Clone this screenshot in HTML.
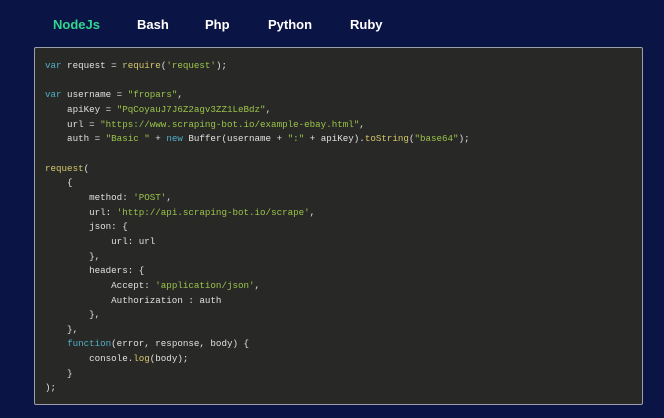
<!DOCTYPE html>
<html><head><style>
html,body{margin:0;padding:0;width:664px;height:418px;background:#0a1445;overflow:hidden}
.tab{position:absolute;top:17px;font:bold 13px "Liberation Sans",sans-serif;color:#fff}
.box{position:absolute;left:34px;top:47px;width:607px;height:356px;background:#282827;border:1px solid #9aa0a8;border-radius:2px}
pre{position:absolute;left:10px;top:11px;margin:0;font:9.2px/14.65px "Liberation Mono",monospace;color:#e0e0e0}
.k{color:#4fb0c6}.s{color:#9bc44a}.f{color:#d4c86a}
</style></head><body>
<div class="tab" style="left:53px;color:#2fd68e">NodeJs</div>
<div class="tab" style="left:137px">Bash</div>
<div class="tab" style="left:205px">Php</div>
<div class="tab" style="left:268px">Python</div>
<div class="tab" style="left:350px">Ruby</div>
<div class="box"><pre><span class="k">var</span> request = <span class="f">require</span>(<span class="s">'request'</span>);

<span class="k">var</span> username = <span class="s">"fropars"</span>,
    apiKey = <span class="s">"PqCoyauJ7J6Z2agv3ZZ1LeBdz"</span>,
    url = <span class="s">"https://www.scraping-bot.io/example-ebay.html"</span>,
    auth = <span class="s">"Basic "</span> + <span class="k">new</span> Buffer(username + <span class="s">":"</span> + apiKey).<span class="f">toString</span>(<span class="s">"base64"</span>);

<span class="f">request</span>(
    {
        method: <span class="s">'POST'</span>,
        url: <span class="s">'http://api.scraping-bot.io/scrape'</span>,
        json: {
            url: url
        },
        headers: {
            Accept: <span class="s">'application/json'</span>,
            Authorization : auth
        },
    },
    <span class="k">function</span>(error, response, body) {
        console.<span class="f">log</span>(body);
    }
);</pre></div>
</body></html>
